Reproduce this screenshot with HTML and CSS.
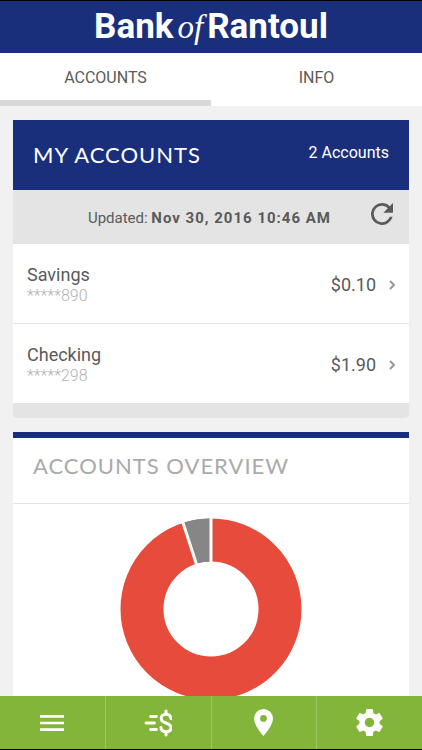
FILE: index.html
```html
<!DOCTYPE html>
<html lang="en">
<head>
<meta charset="utf-8">
<meta name="viewport" content="width=device-width, initial-scale=1">
<title>Bank of Rantoul</title>
<link rel="stylesheet" href="styles.css">
</head>
<body>
<header class="brand">
  <h1 class="logo">Bank<em class="logo-of">of</em>Rantoul</h1>
</header>
<nav class="tabs" aria-label="Sections">
  <a class="tab tab-active" href="#accounts" aria-current="page">ACCOUNTS</a>
  <a class="tab" href="#info">INFO</a>
</nav>
<main class="content">
  <section class="card" id="accounts">
    <div class="card-head">
      <h2 class="card-title">MY ACCOUNTS</h2>
      <p class="count">2 Accounts</p>
    </div>
    <div class="updated">
      <p class="updated-text">Updated: <strong class="date">Nov 30, 2016 10:46 AM</strong></p>
      <button class="refresh" type="button" aria-label="Refresh">
        <svg viewBox="4 4 16 16" width="22" height="22" aria-hidden="true"><path fill="currentColor" d="M17.65 6.35A7.96 7.96 0 0 0 12 4a8 8 0 1 0 7.73 10h-2.08A6 6 0 1 1 12 6c1.66 0 3.14.69 4.22 1.78L13 11h7V4z"/></svg>
      </button>
    </div>
    <ul class="list">
      <li>
        <a class="account" href="#savings">
          <span class="account-info"><span class="name">Savings</span><span class="number">*****890</span></span>
          <span class="amount">$0.10</span>
          <svg class="chevron" viewBox="0 0 6 10" width="6" height="10" aria-hidden="true"><path d="M1 1l4 4-4 4"/></svg>
        </a>
      </li>
      <li>
        <a class="account" href="#checking">
          <span class="account-info"><span class="name">Checking</span><span class="number">*****298</span></span>
          <span class="amount">$1.90</span>
          <svg class="chevron" viewBox="0 0 6 10" width="6" height="10" aria-hidden="true"><path d="M1 1l4 4-4 4"/></svg>
        </a>
      </li>
    </ul>
    <div class="card-foot"></div>
  </section>
  <section class="card overview">
    <h2 class="card-title overview-title">ACCOUNTS OVERVIEW</h2>
    <div class="chart">
      <svg viewBox="-92 -92 184 184" width="184" height="184" role="img" aria-label="Checking 95%, Savings 5%">
        <circle r="69" fill="none" stroke="#e64b3b" stroke-width="43"/>
        <path fill="#868686" d="M0-90.500A90.500 90.500 0 0 0-27.970-86.070L-14.680-45.190A47.500 47.500 0 0 1 0-47.500z"/>
        <path stroke="#fff" stroke-width="3" d="M0-92V-46M-28.430-87.500L-14.210-43.750"/>
      </svg>
    </div>
  </section>
</main>
<nav class="bottom" aria-label="Main">
  <a class="item" href="#menu" aria-label="Menu">
    <svg viewBox="0 0 24 16" width="24" height="16" aria-hidden="true"><path fill="currentColor" d="M0 0h24v2.700H0zM0 6.700h24v2.600H0zM0 13.300h24V16H0z"/></svg>
  </a>
  <a class="item" href="#transfer" aria-label="Transfer">
    <svg viewBox="0 0 28 28" width="28" height="28" aria-hidden="true"><g fill="none" stroke="currentColor" stroke-width="3" stroke-linecap="round"><path stroke-width="2.800" d="M6.500 7.500h6M2 14h8.500M6.500 20.500h6"/><path d="M27 9.500C26.500 6.800 24.600 5.300 22 5.300C19.200 5.300 17.200 7 17.200 9.500C17.200 12 19 13 22 14C25.200 15 27 16 27 18.800C27 21.200 25 22.700 22 22.700C19 22.700 17.200 21.200 16.900 18.500M22 2V5M22 23V26"/></g></svg>
  </a>
  <a class="item" href="#locations" aria-label="Locations">
    <svg viewBox="5 2 14 20" width="19" height="27" aria-hidden="true"><path fill="currentColor" d="M12 2a7 7 0 0 0-7 7c0 5.250 7 13 7 13s7-7.750 7-13a7 7 0 0 0-7-7zm0 9.500a2.500 2.500 0 1 1 0-5 2.500 2.500 0 0 1 0 5z"/></svg>
  </a>
  <a class="item" href="#settings" aria-label="Settings">
    <svg viewBox="2 2 20 20" width="27" height="27" aria-hidden="true"><path fill="currentColor" d="M19.430 12.980c.04-.32.07-.64.07-.98s-.03-.66-.07-.98l2.110-1.650c.19-.15.24-.42.12-.64l-2-3.460c-.12-.22-.39-.3-.61-.22l-2.490 1c-.52-.4-1.080-.73-1.690-.98l-.38-2.650A.49.490 0 0 0 14 2h-4c-.25 0-.46.180-.49.420l-.38 2.650c-.61.250-1.170.590-1.690.980l-2.490-1c-.23-.090-.49 0-.61.220l-2 3.460c-.13.220-.070.490.120.640l2.110 1.650c-.040.320-.070.650-.070.980s.030.660.070.980l-2.110 1.650c-.190.150-.240.420-.120.640l2 3.460c.120.220.390.300.610.220l2.490-1c.520.400 1.080.730 1.690.980l.380 2.650c.030.240.240.420.490.420h4c.250 0 .460-.180.490-.420l.380-2.650c.610-.250 1.170-.590 1.690-.980l2.490 1c.230.090.490 0 .610-.220l2-3.460c.120-.220.070-.490-.120-.640l-2.110-1.650zM12 15.500a3.500 3.500 0 1 1 0-7 3.500 3.500 0 0 1 0 7z"/></svg>
  </a>
</nav>
</body>
</html>
```
FILE: styles.css
```css
* {
  box-sizing: border-box;
}

body {
  margin: 0;
  height: 100vh;
  display: flex;
  flex-direction: column;
  border-top: 1px solid #000;
  border-bottom: 1px solid #000;
  background: #f1f1f1;
  color: #5a5a5a;
  font-family: Roboto, sans-serif;
  font-size: 16px;
  line-height: 20px;
}

h1, h2, p, ul {
  margin: 0;
  padding: 0;
}

a {
  color: inherit;
  text-decoration: none;
}

.brand {
  flex: none;
  padding: 6px 0;
  background: #1a2f7b;
  color: #fff;
}

.logo {
  display: flex;
  justify-content: center;
  align-items: baseline;
  gap: 4px;
  font-size: 35px;
  line-height: 40px;
  font-weight: 700;
}

.logo-of {
  font-family: "Liberation Serif", serif;
  font-size: 33px;
  font-weight: 400;
}

.tabs {
  flex: none;
  display: flex;
  background: #fff;
}

.tab {
  flex: 1;
  padding: 15px 0 12px;
  border-bottom: 6px solid transparent;
  text-align: center;
}

.tab-active {
  border-bottom-color: #d8d8d8;
}

.content {
  flex: 1;
  min-height: 0;
  overflow-y: auto;
  scrollbar-width: none;
  padding: 14px 13px;
}

.card {
  margin-bottom: 14px;
  background: #fff;
}

#accounts {
  border-radius: 0 0 4px 4px;
  overflow: hidden;
}

.card-head {
  display: flex;
  justify-content: space-between;
  padding: 23px 20px;
  background: #1a2f7b;
  color: #fff;
}

.card-title {
  font-family: Lato, sans-serif;
  font-size: 22px;
  line-height: 24px;
  font-weight: 400;
  letter-spacing: 1px;
}

.updated {
  display: flex;
  align-items: center;
  justify-content: flex-end;
  gap: 40px;
  padding: 13px 16px 11px 20px;
  background: #e4e4e4;
  font-size: 15px;
}

.date {
  letter-spacing: 1px;
}

.refresh {
  height: 30px;
  padding: 0 0 8px;
  border: 0;
  background: none;
  color: #5a5a5a;
}

.refresh svg {
  display: block;
}

.list {
  list-style: none;
}

.list li {
  border-bottom: 1px solid #e2e2e2;
}

.account {
  display: flex;
  align-items: center;
  padding: 20px 14px 17px;
}

.account-info {
  flex: 1;
  display: flex;
  flex-direction: column;
}

.name, .amount {
  font-size: 18px;
  line-height: 22px;
}

.number {
  color: #b2b2b2;
  font-weight: 300;
}

.chevron {
  margin-left: 13px;
  fill: none;
  stroke: #999;
  stroke-width: 2;
}

.card-foot {
  height: 14px;
  background: #e4e4e4;
}

.overview {
  border-top: 6px solid #1a2f7b;
}

.overview-title {
  padding: 16px 20px 25px;
  border-bottom: 1px solid #e4e4e4;
  color: #aaa;
}

.chart {
  display: flex;
  justify-content: center;
  padding: 13px 0;
}

.bottom {
  flex: none;
  display: flex;
  background: #82b53a;
  color: #fff;
}

.item {
  flex: 1;
  height: 53px;
  display: flex;
  align-items: center;
  justify-content: center;
}

.item + .item {
  border-left: 1px solid #9cc665;
}
```
